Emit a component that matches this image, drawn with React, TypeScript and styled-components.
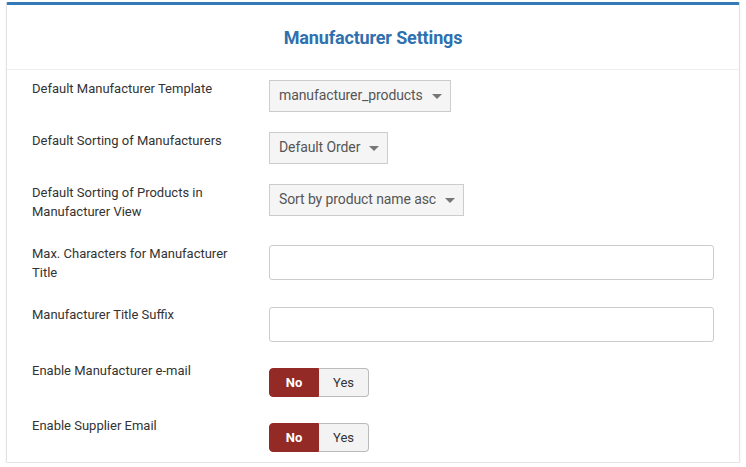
import React from "react";
import styled, { createGlobalStyle } from "styled-components";

const Global = createGlobalStyle`
  html, body { margin: 0; padding: 0; background: #fff; }
  body { font-family: Roboto, "Noto Sans", "Liberation Sans", sans-serif; }
  * { box-sizing: border-box; }
`;

const Page = styled.div`
  padding: 2px 6px 0 6px;
`;

const Card = styled.section`
  width: 734px;
  height: 461px;
  background: #fff;
  border: 1px solid #e3e3e3;
  border-top: 3px solid #337ab7;
  border-radius: 2px;
  box-shadow: 0 1px 2px rgba(0, 0, 0, 0.08);
  display: flex;
  flex-direction: column;
`;

const Header = styled.header`
  height: 65px;
  border-bottom: 1px solid #eeeeee;
  display: flex;
  align-items: center;
  justify-content: center;
`;

const Title = styled.h2`
  margin: 0;
  font-family: Roboto, "Noto Sans", sans-serif;
  font-size: 18px;
  font-weight: 700;
  color: #2f70ae;
  letter-spacing: -0.15px;
`;

const Body = styled.div`
  padding: 9px 25px 0 25px;
  display: flex;
  flex-direction: column;
  gap: 19px;
`;

const Row = styled.div`
  display: grid;
  grid-template-columns: 237px 1fr;
  align-items: start;
`;

const Label = styled.label`
  font-size: 13px;
  line-height: 19px;
  color: #333;
  padding-bottom: 4px;
  padding-right: 30px;
`;

const Control = styled.div<{ $offset: number }>`
  padding-top: ${(p) => p.$offset}px;
  display: flex;
`;

const Select = styled.div`
  height: 32px;
  display: inline-flex;
  align-items: center;
  gap: 9px;
  padding: 0 8px 2px 9px;
  background: #f5f5f5;
  border: 1px solid #cccccc;
  font-size: 14px;
  letter-spacing: -0.1px;
  color: #555;
`;

const Caret = styled.span`
  width: 0;
  height: 0;
  border-left: 5px solid transparent;
  border-right: 5px solid transparent;
  border-top: 5px solid #777;
  margin-top: 3px;
`;

const Input = styled.div`
  width: 445px;
  height: 35px;
  border: 1px solid #cccccc;
  border-radius: 3px;
  background: #fff;
`;

const Toggle = styled.div`
  display: inline-flex;
  height: 29px;
`;

const ToggleBtn = styled.button<{ $active: boolean; $first: boolean }>`
  width: 50px;
  height: 29px;
  font-family: Roboto, "Noto Sans", sans-serif;
  font-size: 13px;
  font-weight: ${(p) => (p.$active ? 700 : 400)};
  color: ${(p) => (p.$active ? "#fff" : "#333")};
  background: ${(p) => (p.$active ? "#942a25" : "#f3f3f3")};
  border: 1px solid ${(p) => (p.$active ? "#942a25" : "#bbbbbb")};
  border-left-width: ${(p) => (p.$first ? 1 : 0)}px;
  border-radius: ${(p) => (p.$first ? "4px 0 0 4px" : "0 4px 4px 0")};
  padding: 0;
  cursor: pointer;
`;

function SelectBox({ value }: { value: string }) {
  return (
    <Select>
      <span>{value}</span>
      <Caret />
    </Select>
  );
}

function YesNo() {
  return (
    <Toggle>
      <ToggleBtn $active $first>No</ToggleBtn>
      <ToggleBtn $active={false} $first={false}>Yes</ToggleBtn>
    </Toggle>
  );
}

export default function App() {
  return (
    <Page>
      <Global />
      <Card>
        <Header>
          <Title>Manufacturer Settings</Title>
        </Header>
        <Body>
          <Row>
            <Label>Default Manufacturer Template</Label>
            <Control $offset={1}><SelectBox value="manufacturer_products" /></Control>
          </Row>
          <Row>
            <Label>Default Sorting of Manufacturers</Label>
            <Control $offset={1}><SelectBox value="Default Order" /></Control>
          </Row>
          <Row>
            <Label>Default Sorting of Products in Manufacturer View</Label>
            <Control $offset={1}><SelectBox value="Sort by product name asc" /></Control>
          </Row>
          <Row>
            <Label>Max. Characters for Manufacturer Title</Label>
            <Control $offset={1}><Input /></Control>
          </Row>
          <Row>
            <Label>Manufacturer Title Suffix</Label>
            <Control $offset={2}><Input /></Control>
          </Row>
          <Row>
            <Label>Enable Manufacturer e-mail</Label>
            <Control $offset={7}><YesNo /></Control>
          </Row>
          <Row>
            <Label>Enable Supplier Email</Label>
            <Control $offset={7}><YesNo /></Control>
          </Row>
        </Body>
      </Card>
    </Page>
  );
}
